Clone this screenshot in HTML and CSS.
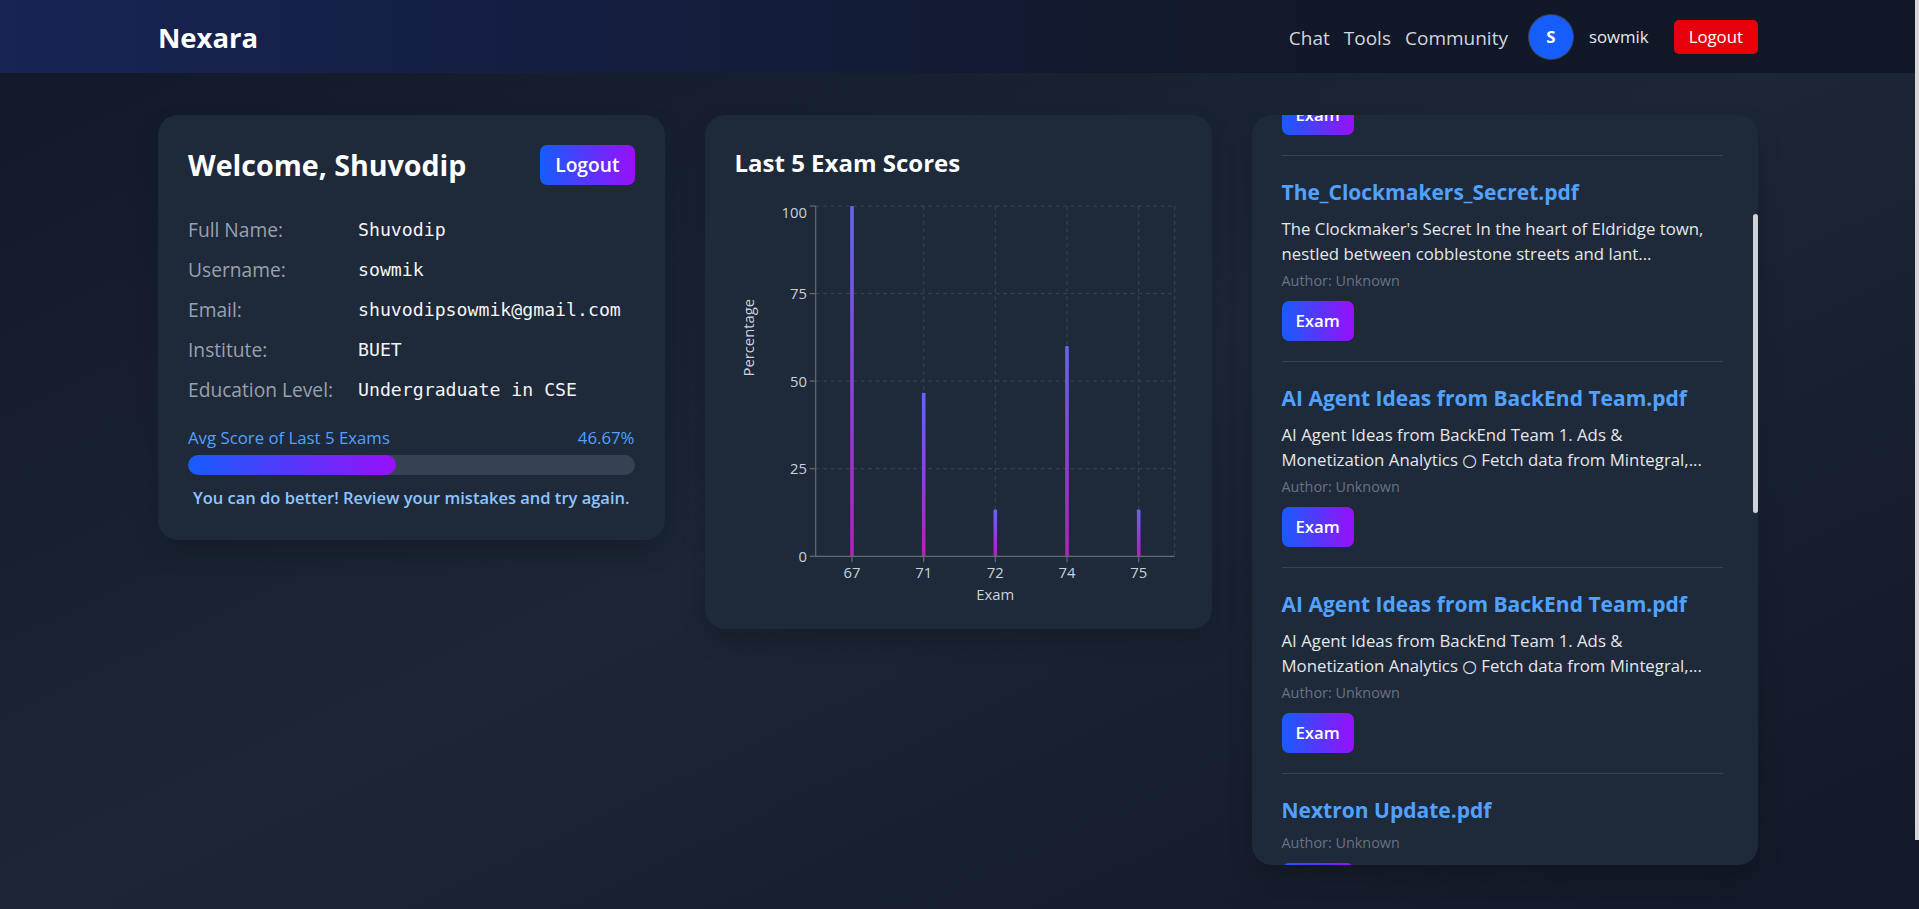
FILE: index.html
```html
<!DOCTYPE html>
<html lang="en">
<head>
<meta charset="utf-8">
<title>Nexara – Dashboard</title>
<link rel="stylesheet" href="styles.css">
</head>
<body>
<header class="navbar">
  <div class="nav-inner">
    <a class="brand" href="#">Nexara</a>
    <nav class="nav-right">
      <ul class="nav-links">
        <li><a href="#">Chat</a></li>
        <li><a href="#">Tools</a></li>
        <li><a href="#">Community</a></li>
      </ul>
      <div class="user">
        <span class="avatar">S</span>
        <span class="user-name">sowmik</span>
      </div>
      <button class="btn-red" type="button">Logout</button>
    </nav>
  </div>
</header>

<main class="main">
  <div class="grid">
    <section class="card profile">
      <div class="profile-head">
        <h1 class="welcome">Welcome, Shuvodip</h1>
        <button class="btn-grad btn-logout" type="button">Logout</button>
      </div>
      <dl class="fields">
        <dt>Full Name:</dt><dd>Shuvodip</dd>
        <dt>Username:</dt><dd>sowmik</dd>
        <dt>Email:</dt><dd>shuvodipsowmik@gmail.com</dd>
        <dt>Institute:</dt><dd>BUET</dd>
        <dt>Education Level:</dt><dd>Undergraduate in CSE</dd>
      </dl>
      <div class="progress">
        <div class="progress-row">
          <span>Avg Score of Last 5 Exams</span>
          <span>46.67%</span>
        </div>
        <div class="progress-track"><div class="progress-fill" style="width:46.67%"></div></div>
        <p class="progress-msg">You can do better! Review your mistakes and try again.</p>
      </div>
    </section>

    <section class="card chart-card">
      <h2 class="chart-title">Last 5 Exam Scores</h2>
      <svg class="chart" width="447" height="399" viewBox="0 0 447 399" role="img" aria-label="Last 5 exam scores">
        <defs>
          <linearGradient id="barGrad" x1="0" y1="0" x2="0" y2="1">
            <stop offset="0" class="stop-top"/>
            <stop offset="1" class="stop-bottom"/>
          </linearGradient>
        </defs>
        <g class="grid-lines">
          <line x1="80.7" y1="6" x2="439.7" y2="6"/>
          <line x1="80.7" y1="93.6" x2="439.7" y2="93.6"/>
          <line x1="80.7" y1="181.1" x2="439.7" y2="181.1"/>
          <line x1="80.7" y1="268.7" x2="439.7" y2="268.7"/>
          <line x1="117" y1="6" x2="117" y2="356.3"/>
          <line x1="188.7" y1="6" x2="188.7" y2="356.3"/>
          <line x1="260.3" y1="6" x2="260.3" y2="356.3"/>
          <line x1="332" y1="6" x2="332" y2="356.3"/>
          <line x1="403.7" y1="6" x2="403.7" y2="356.3"/>
          <line x1="439.7" y1="6" x2="439.7" y2="356.3"/>
        </g>
        <g class="bars">
          <rect x="115.2" y="6" width="3.6" height="350.3" rx="1"/>
          <rect x="186.9" y="192.8" width="3.6" height="163.5" rx="1"/>
          <rect x="258.5" y="309.6" width="3.6" height="46.7" rx="1"/>
          <rect x="330.2" y="146.1" width="3.6" height="210.2" rx="1"/>
          <rect x="401.9" y="309.6" width="3.6" height="46.7" rx="1"/>
        </g>
        <g class="axis">
          <line x1="80.7" y1="6" x2="80.7" y2="356.3"/>
          <line x1="80.7" y1="356.3" x2="439.7" y2="356.3"/>
          <line x1="74.7" y1="6" x2="80.7" y2="6"/>
          <line x1="74.7" y1="93.6" x2="80.7" y2="93.6"/>
          <line x1="74.7" y1="181.1" x2="80.7" y2="181.1"/>
          <line x1="74.7" y1="268.7" x2="80.7" y2="268.7"/>
          <line x1="74.7" y1="356.3" x2="80.7" y2="356.3"/>
          <line x1="117" y1="356.3" x2="117" y2="362.3"/>
          <line x1="188.7" y1="356.3" x2="188.7" y2="362.3"/>
          <line x1="260.3" y1="356.3" x2="260.3" y2="362.3"/>
          <line x1="332" y1="356.3" x2="332" y2="362.3"/>
          <line x1="403.7" y1="356.3" x2="403.7" y2="362.3"/>
        </g>
        <g class="tick-labels y-labels">
          <text x="72" y="18.2">100</text>
          <text x="72" y="99.3">75</text>
          <text x="72" y="187.2">50</text>
          <text x="72" y="274.4">25</text>
          <text x="72" y="362">0</text>
        </g>
        <g class="tick-labels x-labels">
          <text x="117" y="378.2">67</text>
          <text x="188.7" y="378.2">71</text>
          <text x="260.3" y="378.2">72</text>
          <text x="332" y="378.2">74</text>
          <text x="403.7" y="378.2">75</text>
        </g>
        <text class="axis-label" x="260.3" y="400.2">Exam</text>
        <text class="axis-label" transform="translate(19.3 137.7) rotate(-90)">Percentage</text>
      </svg>
    </section>

    <section class="card docs">
      <div class="doc-list">
        <article class="doc">
          <button class="btn-grad btn-exam" type="button">Exam</button>
        </article>
        <article class="doc">
          <h3 class="doc-title">The_Clockmakers_Secret.pdf</h3>
          <p class="doc-desc">The Clockmaker's Secret In the heart of Eldridge town, nestled between cobblestone streets and lant...</p>
          <p class="doc-author">Author: Unknown</p>
          <button class="btn-grad btn-exam" type="button">Exam</button>
        </article>
        <article class="doc">
          <h3 class="doc-title">AI Agent Ideas from BackEnd Team.pdf</h3>
          <p class="doc-desc">AI Agent Ideas from BackEnd Team 1. Ads &amp; Monetization Analytics ○ Fetch data from Mintegral,...</p>
          <p class="doc-author">Author: Unknown</p>
          <button class="btn-grad btn-exam" type="button">Exam</button>
        </article>
        <article class="doc">
          <h3 class="doc-title">AI Agent Ideas from BackEnd Team.pdf</h3>
          <p class="doc-desc">AI Agent Ideas from BackEnd Team 1. Ads &amp; Monetization Analytics ○ Fetch data from Mintegral,...</p>
          <p class="doc-author">Author: Unknown</p>
          <button class="btn-grad btn-exam" type="button">Exam</button>
        </article>
        <article class="doc">
          <h3 class="doc-title">Nextron Update.pdf</h3>
          <p class="doc-author doc-author--solo">Author: Unknown</p>
          <button class="btn-grad btn-exam" type="button">Exam</button>
        </article>
      </div>
      <div class="doc-thumb"></div>
    </section>
  </div>
</main>
<div class="page-scrollbar"></div>
</body>
</html>
```

FILE: styles.css
```css
* { box-sizing: border-box; margin: 0; padding: 0; }

html, body { height: 100%; overflow: hidden; }

body {
  font-family: "Open Sans", "Noto Sans", "DejaVu Sans", sans-serif;
  color: #fff;
  background: linear-gradient(to bottom right, #111827 0%, #1d2636 50%, #111827 100%);
}

a { color: inherit; text-decoration: none; }
ul { list-style: none; }
button { font-family: inherit; border: none; cursor: pointer; }

/* ---------- navbar ---------- */
.navbar {
  height: 73px;
  padding-right: 3px;
  background: linear-gradient(90deg, #172454 0%, #141d3d 35%, #111829 65%, #101727 100%);
}

.nav-inner {
  max-width: 1600px;
  height: 100%;
  margin: 0 auto;
  display: flex;
  align-items: center;
  justify-content: space-between;
}

.brand {
  font-size: 27.5px;
  font-weight: 700;
  line-height: 40px;
  padding-top: 3px;
  color: #fff;
}

.nav-right { display: flex; align-items: center; }

.nav-links {
  display: flex;
  gap: 14px;
  margin-right: 21px;
}

.nav-links a {
  display: block;
  font-size: 19px;
  line-height: 28px;
  padding-top: 2px;
  color: #d1d5dc;
}

.user {
  display: flex;
  align-items: center;
  gap: 16px;
  margin-right: 25px;
}

.avatar {
  width: 44px;
  height: 44px;
  border-radius: 50%;
  background: #155dfc;
  box-shadow: 0 0 0 1px rgba(90, 105, 130, 0.55);
  display: flex;
  align-items: center;
  justify-content: center;
  font-size: 16.8px;
  font-weight: 700;
  color: #fff;
}

.user-name {
  font-size: 16.8px;
  line-height: 24px;
  padding-top: 1px;
  color: #e5e7eb;
}

.btn-red {
  height: 34px;
  padding: 0 15px;
  border-radius: 5px;
  background: #e7000b;
  color: #fff;
  font-size: 16.8px;
  line-height: 34px;
}

/* ---------- layout ---------- */
.main {
  padding: 42px 3px 0 0;
}

.grid {
  max-width: 1600px;
  margin: 0 auto;
  display: grid;
  grid-template-columns: repeat(3, 1fr);
  gap: 40px;
  align-items: start;
}

.card {
  background: #1e2939;
  border-radius: 20px;
  padding: 30px;
  box-shadow: 0 12px 24px rgba(0, 0, 0, 0.18);
}

.btn-grad {
  background: linear-gradient(90deg, #155dfc, #9810fa);
  color: #fff;
  font-weight: 600;
}

/* ---------- profile card ---------- */
.profile-head {
  display: flex;
  align-items: center;
  justify-content: space-between;
  margin-bottom: 30px;
}

.welcome {
  font-size: 28.6px;
  font-weight: 700;
  line-height: 40px;
  color: #fff;
}

.btn-logout {
  height: 40px;
  padding: 0 15px;
  border-radius: 7px;
  font-size: 19.2px;
  line-height: 40px;
}

.fields {
  display: grid;
  grid-template-columns: 170px 1fr;
  row-gap: 10px;
  line-height: 30px;
}

.fields dt {
  font-size: 19.2px;
  color: #99a1af;
}

.fields dd {
  font-family: "DejaVu Sans Mono", "Liberation Mono", monospace;
  font-size: 18.2px;
  color: #f3f4f6;
}

.progress { margin-top: 20px; }

.progress-row {
  display: flex;
  justify-content: space-between;
  font-size: 16.8px;
  line-height: 25px;
  color: #51a2ff;
}

.progress-track {
  margin-top: 5px;
  height: 20px;
  border-radius: 999px;
  background: #364153;
  overflow: hidden;
}

.progress-fill {
  height: 100%;
  border-radius: 999px;
  background: linear-gradient(90deg, #155dfc, #9810fa);
}

.progress-msg {
  margin-top: 10px;
  text-align: center;
  font-size: 16.5px;
  font-weight: 600;
  line-height: 25px;
  color: #8ec5ff;
}

/* ---------- chart card ---------- */
.chart-title {
  font-size: 24px;
  font-weight: 700;
  line-height: 35px;
  margin-bottom: 20px;
  color: #fff;
}

.chart { display: block; overflow: visible; }

.stop-top { stop-color: #6366f1; }
.stop-bottom { stop-color: #b21fbf; }

.grid-lines line {
  stroke: #3b4556;
  stroke-width: 1;
  stroke-dasharray: 3.75 3.75;
}

.bars rect { fill: url(#barGrad); }

.axis line {
  stroke: #666b73;
  stroke-width: 1.2;
}

.tick-labels text,
.axis-label {
  font-family: "Open Sans", "Noto Sans", sans-serif;
  font-size: 14.8px;
  fill: #cbd2dc;
}

.y-labels text { text-anchor: end; }
.x-labels text { text-anchor: middle; }
.axis-label { text-anchor: middle; }

/* ---------- documents card ---------- */
.docs {
  position: relative;
  height: 750px;
  padding: 0 35px 0 30px;
  overflow: hidden;
}

.doc-list { margin-top: -50px; }

.doc {
  padding: 20px 0;
  border-top: 1px solid #364153;
}

.doc:first-child { border-top: none; }

.doc-title {
  font-size: 21px;
  font-weight: 700;
  line-height: 32px;
  color: #51a2ff;
}

.doc-desc {
  margin-top: 8px;
  font-size: 16.8px;
  line-height: 25px;
  color: #e5e7eb;
}

.doc-author {
  margin-top: 5px;
  font-size: 14.4px;
  line-height: 20px;
  color: #6a7282;
}

.doc-author--solo { margin-top: 7px; }

.btn-exam {
  display: block;
  margin-top: 10px;
  height: 40px;
  padding: 0 14px;
  border-radius: 7px;
  font-size: 16.8px;
  line-height: 40px;
}

.doc-thumb {
  position: absolute;
  top: 99px;
  right: 0;
  width: 5px;
  height: 299px;
  border-radius: 3px;
  background: #cfd3d9;
}

.page-scrollbar {
  position: fixed;
  top: 0;
  right: 0;
  width: 4px;
  height: 840px;
  background: #d6d6d6;
}
```
